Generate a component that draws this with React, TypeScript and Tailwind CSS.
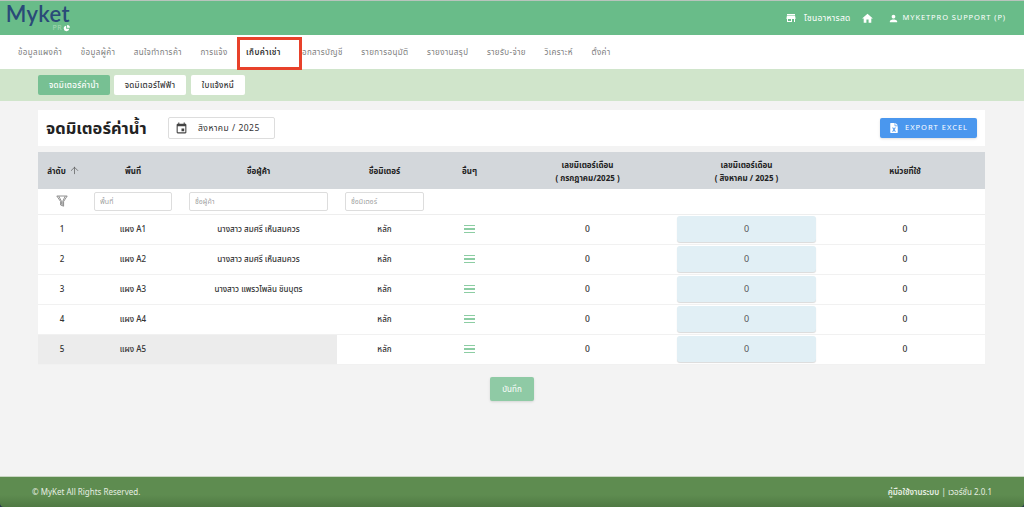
import { ArrowUp } from "lucide-react";
import { FaFileExcel } from "react-icons/fa";
import { MdEvent, MdHome, MdPerson, MdStore } from "react-icons/md";

const navItems = [
  "ข้อมูลแผงค้า",
  "ข้อมูลผู้ค้า",
  "สนใจทำการค้า",
  "การแจ้ง",
  "เก็บค่าเช่า",
  "เอกสารบัญชี",
  "รายการอนุมัติ",
  "รายงานสรุป",
  "รายรับ-จ่าย",
  "วิเคราะห์",
  "ตั้งค่า",
];

const rows = [
  { id: 1, stall: "แผง A1", name: "นางสาว สมศรี เห็นสมควร" },
  { id: 2, stall: "แผง A2", name: "นางสาว สมศรี เห็นสมควร" },
  { id: 3, stall: "แผง A3", name: "นางสาว แพรวไพลิน ชินบุตร" },
  { id: 4, stall: "แผง A4", name: "" },
  { id: 5, stall: "แผง A5", name: "" },
];

const Logo = () => (
  <div className="flex w-[62px] flex-col items-end">
    <span className="text-[22px] leading-[20px] font-semibold tracking-[0.4px] text-[#2a4a78] [font-family:Lato,sans-serif]">
      Myket
    </span>
    <span className="flex items-center gap-[1px] text-[7px] leading-[8px] tracking-[0.5px] text-[#a5d8b5]">
      PR
      <svg viewBox="0 0 10 10" className="h-[7px] w-[7px]">
        <path d="M4.500 1a4 4 0 1 0 4.500 4.500H4.500z" fill="#fff" />
        <path d="M5.800 0a4 4 0 0 1 4 4H5.800z" fill="#fff" />
      </svg>
    </span>
  </div>
);

const FilterIcon = () => (
  <svg viewBox="0 0 12 12" className="h-[12px] w-[12px]" fill="none" stroke="#777" strokeWidth="0.8">
    <path d="M0.800 1h10.400L7.600 6.500v4.700L4.600 10V6.500z" />
    <path d="M2.800 1.200l2.600 5v3.400M9.200 1.200l-2.400 5v4.200" />
  </svg>
);

const RowMenu = () => (
  <span className="mx-auto flex w-[11px] flex-col gap-[2px]">
    <span className="h-[1.500px] bg-[#8ccda3]" />
    <span className="h-[1.500px] bg-[#8ccda3]" />
    <span className="h-[1.500px] bg-[#8ccda3]" />
  </span>
);

export default function App() {
  return (
    <div className="flex h-screen flex-col overflow-hidden bg-[#f3f3f3] text-[8px] text-[#333] [font-family:'Noto_Sans','Noto_Sans_Thai',sans-serif]">
      <header className="flex h-[35px] items-center justify-between border-t border-[#b9c4bd] bg-[#69bc89] pr-[18px] pl-[8px] text-white">
        <Logo />
        <div className="flex items-center">
          <MdStore className="h-[12px] w-[12px]" />
          <span className="ml-[7px] text-[8.500px] tracking-[0.3px]">โซนอาหารสด</span>
          <MdHome className="ml-[10px] h-[13px] w-[13px]" />
          <MdPerson className="ml-[14px] h-[11px] w-[11px]" />
          <span className="ml-[4px] text-[7.500px] tracking-[0.9px]">MYKETPRO SUPPORT (P)</span>
        </div>
      </header>

      <nav className="relative flex h-[34px] items-center gap-[18.500px] bg-white pl-[18px] text-[8px] tracking-[0.4px] text-[#7d7d7d]">
        {navItems.map((item) => (
          <span key={item} className={item === "เก็บค่าเช่า" ? "font-semibold text-[#333]" : ""}>
            {item}
          </span>
        ))}
        <div className="absolute top-[2px] left-[237px] h-[33px] w-[65px] border-[3px] border-[#e8412a]" />
      </nav>

      <div className="flex h-[32px] items-center gap-[4px] bg-[#d0e5cb] pl-[38px] font-medium tracking-[0.3px]">
        <button className="h-[20px] w-[72px] rounded-[2px] bg-[#77c093] text-white">จดมิเตอร์ค่าน้ำ</button>
        <button className="h-[20px] w-[72px] rounded-[2px] bg-white">จดมิเตอร์ไฟฟ้า</button>
        <button className="ml-[1px] h-[20px] w-[54px] rounded-[2px] bg-white">ใบแจ้งหนี้</button>
      </div>

      <main className="flex-1 px-[38px] pt-[9px]">
        <div className="mr-[1px] flex h-[36px] items-center bg-white px-[8px]">
          <h1 className="w-[122px] text-[16.500px] font-bold text-[#222]">จดมิเตอร์ค่าน้ำ</h1>
          <div className="flex h-[22px] w-[107px] items-center rounded-[2px] border border-[#ddd] pl-[6px] text-[8.500px]">
            <MdEvent className="h-[13px] w-[13px] text-[#444]" />
            <span className="ml-[10px] tracking-[0.5px]">สิงหาคม / 2025</span>
          </div>
          <button className="ml-auto flex h-[20px] w-[97px] items-center justify-center gap-[6px] rounded-[2px] bg-[#4a97ee] text-[7.500px] tracking-[1px] text-white shadow-sm">
            <FaFileExcel className="h-[10px] w-[10px]" />
            EXPORT EXCEL
          </button>
        </div>

        <table className="mt-[6px] w-[947px] table-fixed border-collapse text-center text-[8px]">
          <colgroup>
            <col className="w-[48px]" />
            <col className="w-[94px]" />
            <col className="w-[157px]" />
            <col className="w-[95px]" />
            <col className="w-[75px]" />
            <col className="w-[161px]" />
            <col className="w-[157px]" />
            <col className="w-[160px]" />
          </colgroup>
          <thead>
            <tr className="h-[37px] bg-[#d3d7db] font-bold text-[#222]">
              <th>
                <span className="flex items-center justify-center gap-[3px] pl-[3px]">
                  ลำดับ
                  <ArrowUp className="h-[11px] w-[11px] text-[#555]" strokeWidth={1.5} />
                </span>
              </th>
              <th>พื้นที่</th>
              <th>ชื่อผู้ค้า</th>
              <th>ชื่อมิเตอร์</th>
              <th>อื่นๆ</th>
              <th className="leading-[13px]">
                เลขมิเตอร์เดือน
                <br />( กรกฎาคม/2025 )
              </th>
              <th className="leading-[13px]">
                เลขมิเตอร์เดือน
                <br />( สิงหาคม / 2025 )
              </th>
              <th>หน่วยที่ใช้</th>
            </tr>
            <tr className="h-[25px] border-b border-[#eee] bg-white">
              <td>
                <span className="flex justify-center">
                  <FilterIcon />
                </span>
              </td>
              <td className="px-[8px]">
                <input readOnly placeholder="พื้นที่" className="h-[19px] w-full rounded-[2px] border border-[#ddd] px-[5px] text-[7px]" />
              </td>
              <td className="px-[9px]">
                <input readOnly placeholder="ชื่อผู้ค้า" className="h-[19px] w-full rounded-[2px] border border-[#ddd] px-[5px] text-[7px]" />
              </td>
              <td className="px-[8px]">
                <input readOnly placeholder="ชื่อมิเตอร์" className="h-[19px] w-full rounded-[2px] border border-[#ddd] px-[5px] text-[7px]" />
              </td>
              <td colSpan={4} />
            </tr>
          </thead>
          <tbody className="font-medium">
            {rows.map((row) => {
              const shade = row.id === 5 ? "bg-[#ececec]" : "";
              return (
                <tr key={row.id} className="h-[30px] border-b border-[#f1f1f1] bg-white">
                  <td className={shade}>{row.id}</td>
                  <td className={shade}>{row.stall}</td>
                  <td className={shade}>{row.name}</td>
                  <td>หลัก</td>
                  <td>
                    <RowMenu />
                  </td>
                  <td className="text-[8.500px]">0</td>
                  <td className="px-[9px]">
                    <div className="flex h-[26px] items-center justify-center rounded-[3px] bg-[#e1eff5] text-[9px] font-normal text-[#555] shadow-[0_1px_1px_rgba(0,0,0,0.15)]">
                      0
                    </div>
                  </td>
                  <td className="text-[8.500px]">0</td>
                </tr>
              );
            })}
          </tbody>
        </table>

        <div className="mt-[12px] flex justify-center">
          <button className="h-[24px] w-[44px] rounded-[2px] bg-[#8fcaa5] text-white shadow-sm">บันทึก</button>
        </div>
      </main>

      <div className="bg-[#26384a]">
        <footer className="flex h-[31px] items-center justify-between rounded-b-[4px] border-t border-[#c9d6c3] bg-[linear-gradient(#5e8c50_60%,#4f7943)] px-[32px] text-[8px] text-[#e6eee2]">
          <span>© MyKet All Rights Reserved.</span>
          <span>
            <span className="font-semibold">คู่มือใช้งานระบบ</span> | เวอร์ชั่น 2.0.1
          </span>
        </footer>
      </div>
    </div>
  );
}
